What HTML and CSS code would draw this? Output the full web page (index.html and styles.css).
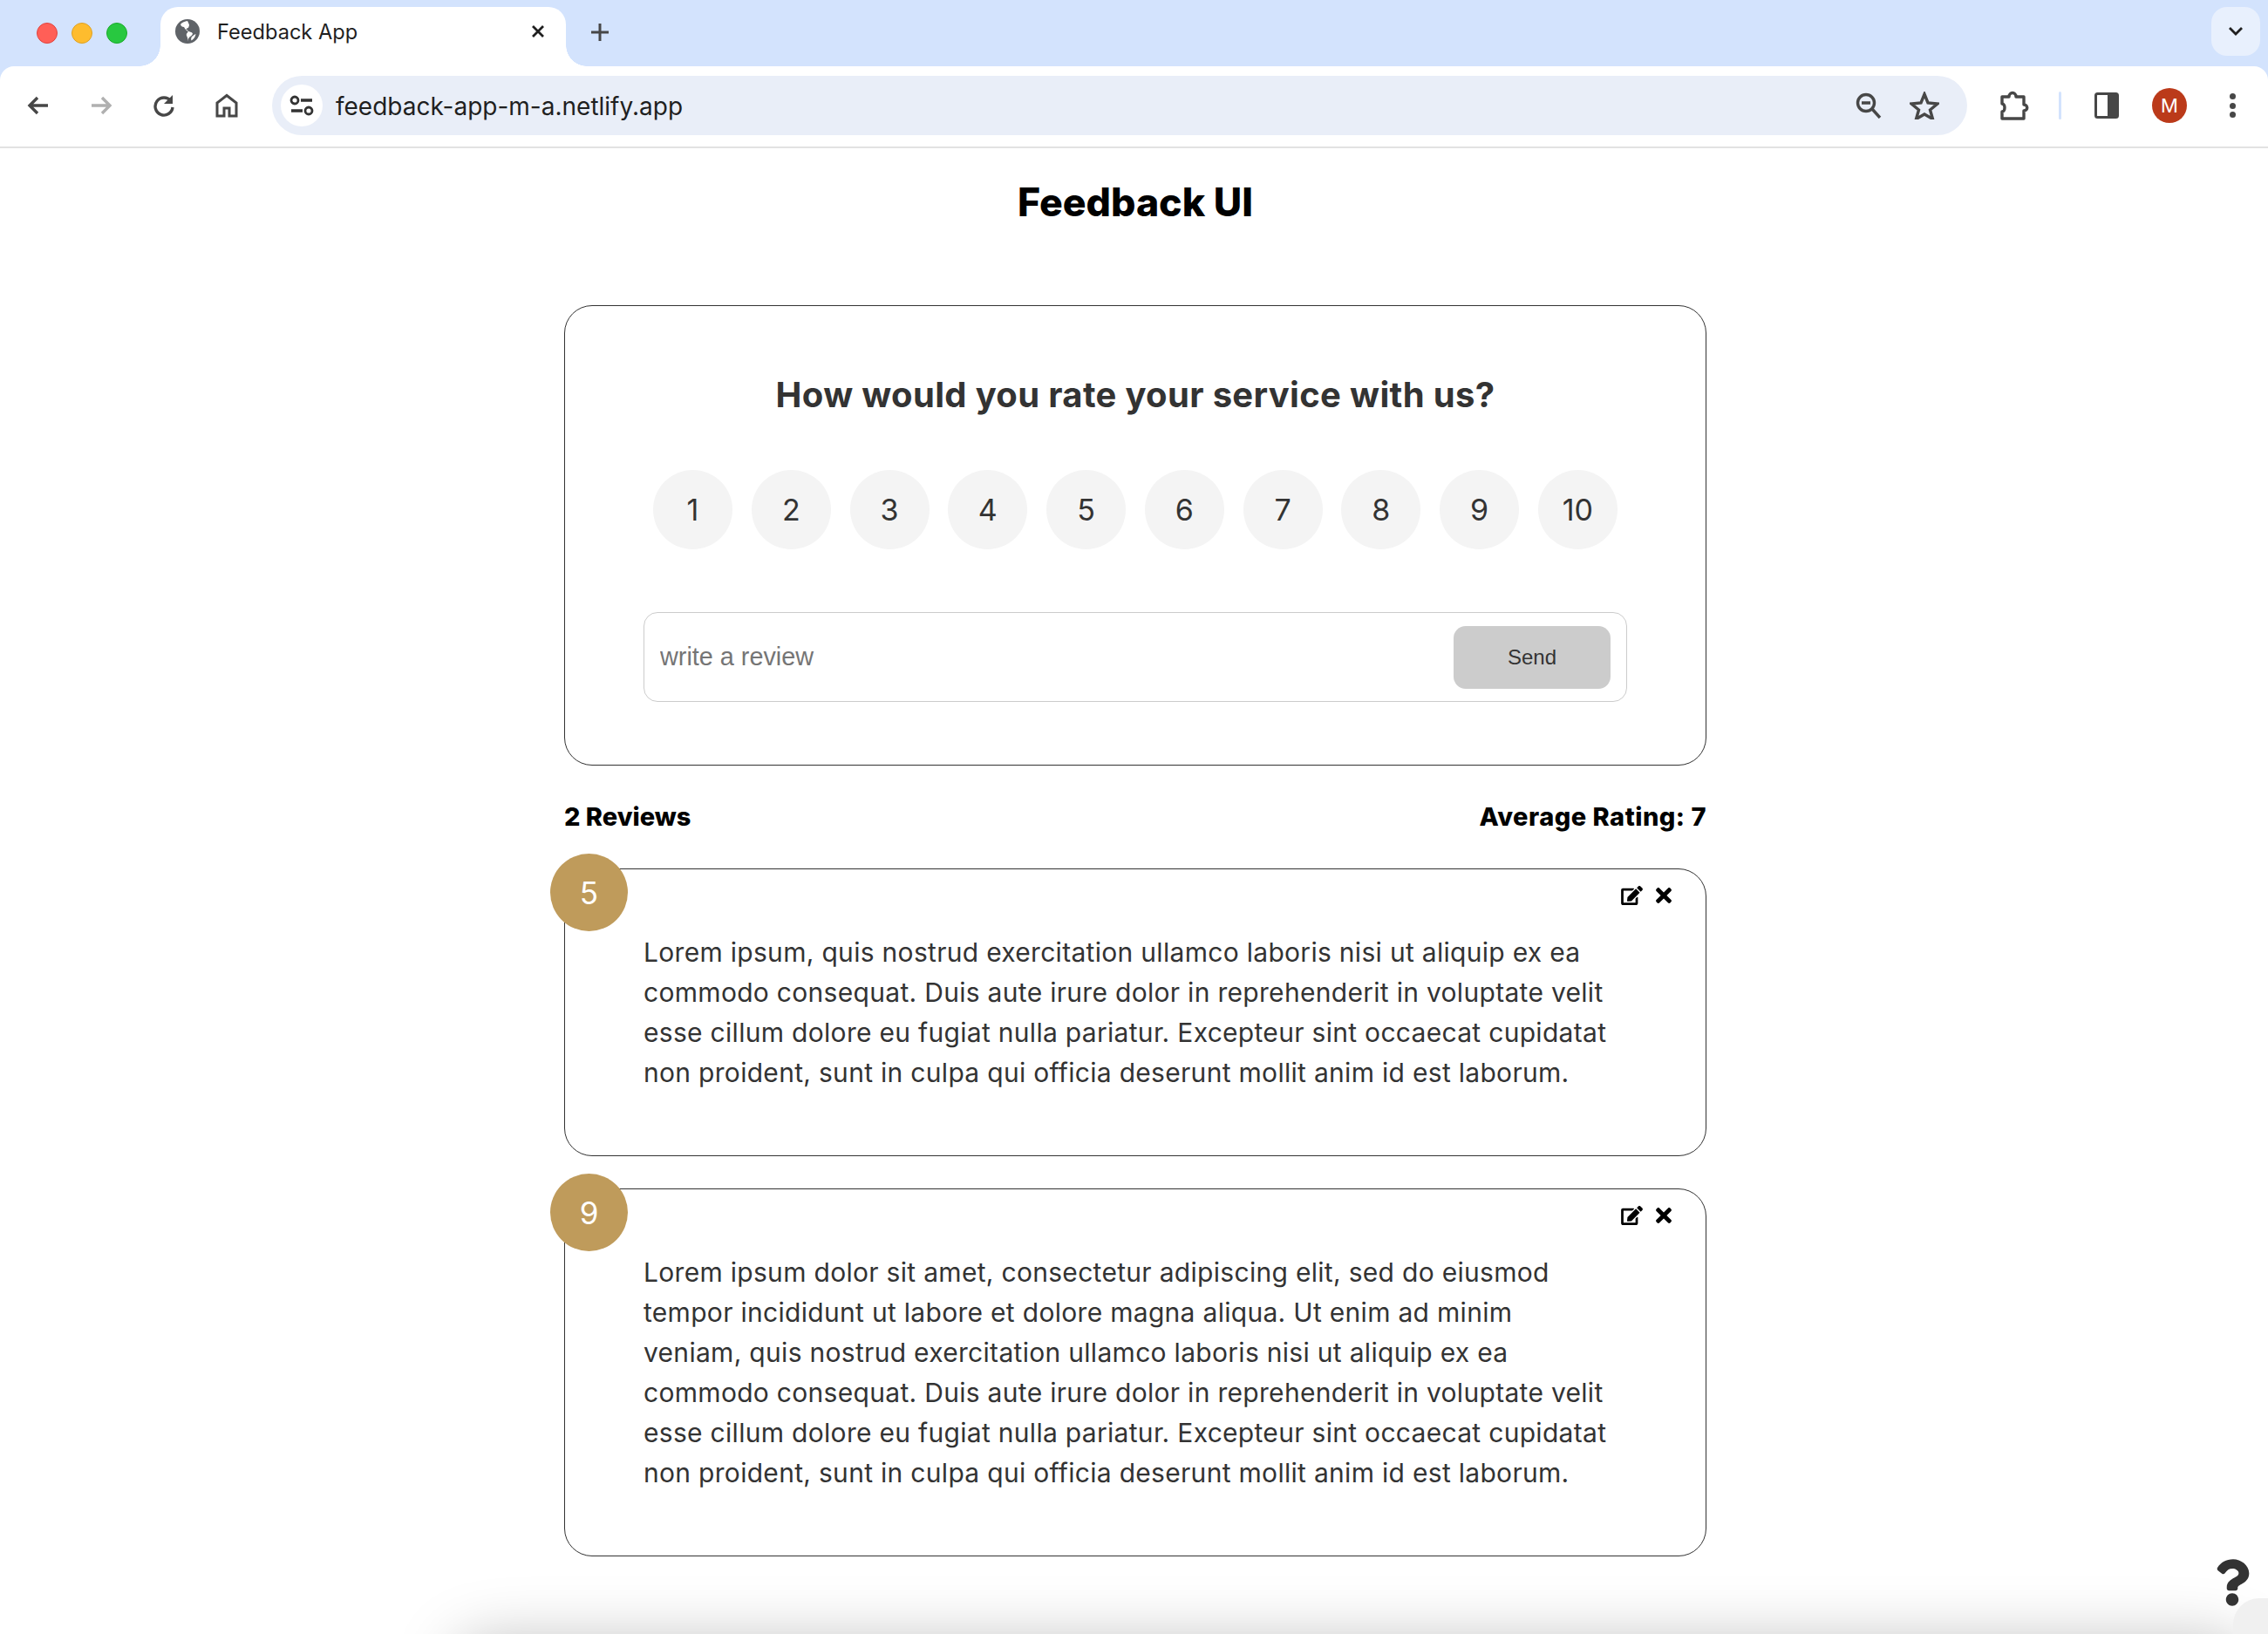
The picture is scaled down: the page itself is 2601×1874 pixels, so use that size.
FILE: index.html
```html
<!DOCTYPE html>
<html lang="en">
<head>
<meta charset="utf-8">
<title>Feedback App</title>
<link rel="stylesheet" href="styles.css">
</head>
<body>
<header class="browser">
  <div class="tabstrip">
    <div class="lights"><span class="light red"></span><span class="light amber"></span><span class="light green"></span></div>
    <div class="tab">
      <svg class="globe" viewBox="0 0 28 28"><circle cx="14" cy="14" r="14" fill="#5f6368"/><path d="M14 2c-3 .3-6 1.500-8 4 .5 2 2 3 4 3 1 1 1 3 3 3 2 .5 2 2 1 3.500-1.500 1-1.500 3-.5 4.500 1 2 1 4 1.500 5.500-1-6 4-5 5-9-1-2-4-2-6-3-2-.5-2-2-.5-3 2-.5 2-2 2.500-3.500C16 6 15 4 14 2z" fill="#fff"/><path d="M19 20c1.500-1 3-2.500 4.500-3-.5 3-2 6-5 7.500-.5-1.500-.5-3 .5-4.500z" fill="#fff"/></svg>
      <span class="tab-title">Feedback App</span>
      <svg class="tab-close" viewBox="0 0 18 18"><path d="M3 3l12 12M15 3L3 15" stroke="#1f1f1f" stroke-width="2.800" fill="none"/></svg>
    </div>
    <svg class="new-tab" viewBox="0 0 22 22"><path d="M11 1v20M1 11h20" stroke="#474747" stroke-width="3" fill="none"/></svg>
    <div class="tab-menu"><svg viewBox="0 0 18 12" class="chev"><path d="M2 2l7 7 7-7" stroke="#1f1f1f" stroke-width="2.800" fill="none"/></svg></div>
  </div>
  <div class="toolbar">
    <svg class="tool-icon" viewBox="0 0 28 28"><path d="M25 14H5M13 5l-9 9 9 9" stroke="#474747" stroke-width="3.400" fill="none"/></svg>
    <svg class="tool-icon" viewBox="0 0 28 28"><path d="M3 14h20M15 5l9 9-9 9" stroke="#b0b0b0" stroke-width="3.400" fill="none"/></svg>
    <svg class="tool-icon" viewBox="0 0 28 28"><path d="M22 9a10 10 0 1 0 2 7" stroke="#474747" stroke-width="3.400" fill="none"/><path d="M24 2v10H14z" fill="#474747"/></svg>
    <svg class="tool-icon" viewBox="0 0 28 28"><path d="M14 2.500L3 11v15h8v-9h6v9h8V11z" stroke="#474747" stroke-width="3" fill="none"/></svg>
    <div class="omnibox">
      <span class="site-info"><svg viewBox="0 0 28 24" class="tune"><circle cx="6" cy="6" r="4" stroke="#333" stroke-width="2.800" fill="none"/><path d="M13 6h13M2 18h13" stroke="#333" stroke-width="3.400" fill="none"/><circle cx="22" cy="18" r="4" stroke="#333" stroke-width="2.800" fill="none"/></svg></span>
      <span class="url">feedback-app-m-a.netlify.app</span>
      <svg class="omni-icon zoom-out" viewBox="0 0 30 30"><circle cx="12" cy="12" r="9.500" stroke="#474747" stroke-width="3.400" fill="none"/><path d="M7 12h10M19 19l9 10" stroke="#474747" stroke-width="3.400" fill="none"/></svg>
      <svg class="omni-icon star" viewBox="0 0 34 32"><path d="M17 3l4 10 11 1-8.500 7 3 10.500L17 26l-9.500 5.500 3-10.500L2 14l11-1z" stroke="#474747" stroke-width="3.400" fill="none"/></svg>
    </div>
    <svg class="puzzle" viewBox="0 0 34 34"><path d="M3 7h8c0-6 8-6 8 0h9v9c5 0 5 7 0 7v9H3v-8c4 0 4-9 0-9z" stroke="#474747" stroke-width="3.400" stroke-linejoin="round" fill="none"/></svg>
    <span class="divider"></span>
    <svg class="panel" viewBox="0 0 28 30"><rect x="1.500" y="1.500" width="25" height="27" rx="2" stroke="#474747" stroke-width="3" fill="#fff"/><rect x="15" y="2" width="12" height="26" fill="#474747"/></svg>
    <span class="avatar">M</span>
    <span class="kebab"><i></i><i></i><i></i></span>
  </div>
</header>

<main class="page">
  <h1 class="title">Feedback UI</h1>

  <section class="card form-card">
    <h2 class="prompt">How would you rate your service with us?</h2>
    <ul class="ratings">
      <li>1</li><li>2</li><li>3</li><li>4</li><li>5</li><li>6</li><li>7</li><li>8</li><li>9</li><li>10</li>
    </ul>
    <form class="review-input">
      <input type="text" placeholder="write a review">
      <button type="button">Send</button>
    </form>
  </section>

  <div class="stats"><span>2 Reviews</span><span class="avg">Average Rating: 7</span></div>

  <article class="card review">
    <span class="badge">5</span>
    <div class="actions">
      <svg class="edit" viewBox="0 0 576 512"><path d="M402.600 83.200l90.200 90.200c3.800 3.800 3.800 10 0 13.800L274.400 405.600l-92.800 10.300c-12.400 1.400-22.900-9.100-21.500-21.500l10.300-92.800L388.800 83.200c3.800-3.800 10-3.800 13.800 0zm162-22.900l-48.800-48.800c-15.200-15.200-39.900-15.200-55.200 0l-35.400 35.400c-3.800 3.800-3.800 10 0 13.800l90.200 90.200c3.800 3.800 10 3.800 13.800 0l35.400-35.400c15.200-15.300 15.200-40 0-55.200zM384 346.200V448H64V128h229.800c3.200 0 6.200-1.300 8.500-3.500l40-40c7.600-7.600 2.200-20.500-8.500-20.500H48C21.500 64 0 85.500 0 112v352c0 26.500 21.500 48 48 48h352c26.500 0 48-21.500 48-48V306.200c0-10.700-12.900-16-20.500-8.500l-40 40c-2.200 2.300-3.500 5.300-3.500 8.500z"/></svg>
      <svg class="del" viewBox="0 0 352 512"><path d="M242.720 256l100.070-100.070c12.280-12.280 12.280-32.190 0-44.480l-22.240-22.240c-12.280-12.280-32.190-12.280-44.480 0L176 189.280 75.930 89.210c-12.280-12.280-32.190-12.280-44.480 0L9.210 111.450c-12.280 12.280-12.280 32.190 0 44.480L109.280 256 9.210 356.070c-12.280 12.280-12.280 32.190 0 44.480l22.240 22.240c12.280 12.280 32.200 12.280 44.480 0L176 322.720l100.070 100.070c12.280 12.280 32.200 12.280 44.480 0l22.240-22.240c12.280-12.280 12.280-32.190 0-44.480L242.720 256z"/></svg>
    </div>
    <p>Lorem ipsum, quis nostrud exercitation ullamco laboris nisi ut aliquip ex ea<br>commodo consequat. Duis aute irure dolor in reprehenderit in voluptate velit<br>esse cillum dolore eu fugiat nulla pariatur. Excepteur sint occaecat cupidatat<br>non proident, sunt in culpa qui officia deserunt mollit anim id est laborum.</p>
  </article>

  <article class="card review">
    <span class="badge">9</span>
    <div class="actions">
      <svg class="edit" viewBox="0 0 576 512"><path d="M402.600 83.200l90.200 90.200c3.800 3.800 3.800 10 0 13.800L274.400 405.600l-92.800 10.300c-12.400 1.400-22.900-9.100-21.500-21.500l10.300-92.800L388.800 83.200c3.800-3.800 10-3.800 13.800 0zm162-22.900l-48.800-48.800c-15.200-15.200-39.900-15.200-55.200 0l-35.400 35.400c-3.800 3.800-3.800 10 0 13.800l90.200 90.200c3.800 3.800 10 3.800 13.800 0l35.400-35.400c15.200-15.300 15.200-40 0-55.200zM384 346.200V448H64V128h229.800c3.200 0 6.200-1.300 8.500-3.500l40-40c7.600-7.600 2.200-20.500-8.500-20.500H48C21.500 64 0 85.500 0 112v352c0 26.500 21.500 48 48 48h352c26.500 0 48-21.500 48-48V306.200c0-10.700-12.900-16-20.500-8.500l-40 40c-2.200 2.300-3.500 5.300-3.500 8.500z"/></svg>
      <svg class="del" viewBox="0 0 352 512"><path d="M242.720 256l100.070-100.070c12.280-12.280 12.280-32.190 0-44.480l-22.240-22.240c-12.280-12.280-32.190-12.280-44.480 0L176 189.280 75.930 89.210c-12.280-12.280-32.190-12.280-44.480 0L9.210 111.450c-12.280 12.280-12.280 32.190 0 44.480L109.280 256 9.210 356.070c-12.280 12.280-12.280 32.190 0 44.480l22.240 22.240c12.280 12.280 32.200 12.280 44.480 0L176 322.720l100.070 100.070c12.280 12.280 32.200 12.280 44.480 0l22.240-22.240c12.280-12.280 12.280-32.190 0-44.480L242.720 256z"/></svg>
    </div>
    <p>Lorem ipsum dolor sit amet, consectetur adipiscing elit, sed do eiusmod<br>tempor incididunt ut labore et dolore magna aliqua. Ut enim ad minim<br>veniam, quis nostrud exercitation ullamco laboris nisi ut aliquip ex ea<br>commodo consequat. Duis aute irure dolor in reprehenderit in voluptate velit<br>esse cillum dolore eu fugiat nulla pariatur. Excepteur sint occaecat cupidatat<br>non proident, sunt in culpa qui officia deserunt mollit anim id est laborum.</p>
  </article>
</main>

<div class="bottom-shadow"></div>
<div class="corner-blob"></div>
<svg class="help" viewBox="0 0 384 512"><path d="M202.021 0C122.202 0 70.503 32.703 29.914 91.026c-7.363 10.580-5.093 25.086 5.178 32.874l43.138 32.709c10.373 7.865 25.132 6.026 33.253-4.148 25.049-31.381 43.630-49.449 82.757-49.449 30.764 0 68.816 19.799 68.816 49.631 0 22.552-18.617 34.134-48.993 51.164-35.423 19.860-82.299 44.576-82.299 106.405V320c0 13.255 10.745 24 24 24h72.471c13.255 0 24-10.745 24-24v-5.773c0-42.860 125.268-44.645 125.268-160.627C377.504 66.256 286.902 0 202.021 0zM192 373.459c-38.196 0-69.271 31.075-69.271 69.271 0 38.195 31.075 69.270 69.271 69.270s69.271-31.075 69.271-69.271-31.075-69.270-69.271-69.270z"/></svg>
</body>
</html>
```
FILE: styles.css
```css
* { box-sizing: border-box; }
html, body { margin: 0; height: 100%; }
body {
  position: relative;
  height: 1874px;
  overflow: hidden;
  background: #fff;
  color: #333;
  font-family: "Inter", "Liberation Sans", sans-serif;
}

/* Browser chrome */
.browser { height: 170px; background: #d3e3fd; }
.tabstrip {
  height: 76px;
  display: flex;
  align-items: flex-start;
  position: relative;
}
.lights { display: flex; gap: 16px; margin: 26px 0 0 42px; width: 142px; }
.light { width: 24px; height: 24px; border-radius: 50%; }
.red { background: #ff5f57; border: 1px solid #e0443e; }
.amber { background: #febc2e; border: 1px solid #dea123; }
.green { background: #28c840; border: 1px solid #1aab29; }
.tab {
  position: relative;
  width: 465px;
  height: 68px;
  margin-top: 8px;
  background: #fff;
  border-radius: 20px 20px 0 0;
  display: flex;
  align-items: center;
  padding: 0 23px 12px 17px;
  font-size: 23.600px;
  color: #1f1f1f;
}
.tab::before, .tab::after {
  content: "";
  position: absolute;
  bottom: 0;
  width: 24px;
  height: 24px;
}
.tab::before { left: -24px; background: radial-gradient(circle at 0 0, #d3e3fd 23.500px, #fff 24px); }
.tab::after { right: -24px; background: radial-gradient(circle at 100% 0, #d3e3fd 23.500px, #fff 24px); }
.globe { width: 28px; height: 28px; flex: none; }
.tab-title { margin-left: 20px; flex: 1; }
.tab-close { width: 18px; height: 18px; }
.new-tab { width: 22px; height: 22px; margin: 26px 0 0 28px; }
.tab-menu {
  margin: 8px 9px 0 auto;
  width: 56px;
  height: 56px;
  border-radius: 18px;
  background: #e8f0fd;
  display: flex;
  align-items: center;
  justify-content: center;
}
.chev { width: 18px; height: 12px; }

.toolbar {
  height: 94px;
  background: #fff;
  border-radius: 16px 16px 0 0;
  border-bottom: 2px solid #e2e2e2;
  display: flex;
  align-items: center;
  padding: 0 0 2px 30px;
}
.tool-icon { width: 28px; height: 28px; margin-right: 44px; flex: none; }
.tool-icon:nth-child(4) { margin-right: 38px; }
.omnibox {
  width: 1944px;
  height: 68px;
  border-radius: 34px;
  background: #e9eef8;
  display: flex;
  align-items: center;
  padding: 0 32px 0 10px;
}
.site-info {
  width: 48px;
  height: 48px;
  border-radius: 50%;
  background: #fff;
  display: flex;
  align-items: center;
  justify-content: center;
  flex: none;
}
.tune { width: 28px; height: 24px; }
.url { margin: 2px 0 0 15px; flex: 1; font-size: 28px; color: #1f1f1f; }
.omni-icon { flex: none; }
.zoom-out { width: 30px; height: 30px; margin-right: 32px; }
.star { width: 34px; height: 32px; }
.puzzle { width: 34px; height: 34px; margin-left: 37px; flex: none; }
.divider { width: 3px; height: 32px; border-radius: 2px; background: #d3e3fd; margin-left: 34px; flex: none; }
.panel { width: 28px; height: 30px; margin-left: 38px; flex: none; }
.avatar {
  width: 40px;
  height: 40px;
  margin-left: 38px;
  border-radius: 50%;
  background: #bb3a1a;
  color: #fff;
  font-size: 22px;
  display: flex;
  align-items: center;
  justify-content: center;
  flex: none;
}
.kebab { display: flex; flex-direction: column; gap: 3.500px; margin-left: 49px; }
.kebab i { width: 7px; height: 7px; border-radius: 50%; background: #474747; }

/* Page */
.page { width: 1310px; margin: 0 0 0 647px; }
.title {
  margin: 32px 0 88px;
  line-height: 60px;
  font-size: 44.600px;
  font-weight: 800;
  text-align: center;
  color: #000;
}
.card {
  border: 1.500px solid #333;
  border-radius: 32px;
  background: #fff;
}
.form-card { height: 528px; padding: 77px 90px 0; }
.prompt {
  margin: 0;
  line-height: 50px;
  font-size: 40px;
  font-weight: 700;
  letter-spacing: .33px;
  text-align: center;
  color: #333;
}
.ratings {
  list-style: none;
  margin: 61px 0 0;
  padding: 0 11px;
  display: flex;
  justify-content: space-between;
}
.ratings li {
  width: 91px;
  height: 91px;
  border-radius: 50%;
  background: #f4f4f4;
  display: flex;
  align-items: center;
  justify-content: center;
  font-size: 34px;
  color: #333;
}
.review-input {
  margin-top: 72px;
  height: 103px;
  border: 1.500px solid #ccc;
  border-radius: 16px;
  display: flex;
  align-items: center;
  justify-content: space-between;
  padding: 0 18px;
}
.review-input input {
  flex: 1;
  border: 0;
  outline: 0;
  padding: 0;
  background: transparent;
  font: 28.800px "Liberation Sans", sans-serif;
  color: #333;
}
.review-input input::placeholder { color: #757575; opacity: 1; }
.review-input button {
  width: 180px;
  height: 72px;
  border: 0;
  border-radius: 14px;
  background: #ccc;
  color: #333;
  font: 24px "Liberation Sans", sans-serif;
}
.stats {
  display: flex;
  justify-content: space-between;
  height: 118px;
  padding-bottom: 2px;
  align-items: center;
  font-size: 29px;
  font-weight: 800;
  color: #000;
}
.avg { letter-spacing: .5px; }
.review {
  position: relative;
  padding: 72px 60px 72px 90px;
  margin-bottom: 37px;
}
.review p {
  margin: 0;
  font-size: 30px;
  letter-spacing: .3px;
  line-height: 46px;
  color: #333;
  white-space: nowrap;
}
.badge {
  position: absolute;
  left: -17px;
  top: -18px;
  width: 89px;
  height: 89px;
  border-radius: 50%;
  background: #bf9b5b;
  color: #fff;
  font-size: 35px;
  display: flex;
  align-items: center;
  justify-content: center;
}
.actions {
  position: absolute;
  top: 17px;
  right: 39px;
  display: flex;
  align-items: center;
  gap: 15px;
}
.edit { width: 25px; height: 22px; }
.del { width: 18px; height: 26px; }
.bottom-shadow {
  position: absolute;
  left: 530px;
  right: 30px;
  top: 1892px;
  height: 60px;
  border-radius: 30px;
  box-shadow: 0 0 70px 10px rgba(0, 0, 0, .26);
}
.corner-blob {
  position: absolute;
  left: 2561px;
  top: 1833px;
  width: 80px;
  height: 80px;
  border-radius: 30px;
  background: #f0f0f0;
}
.help { position: absolute; left: 2540px; top: 1788px; width: 40px; height: 54px; fill: #333; }
```
